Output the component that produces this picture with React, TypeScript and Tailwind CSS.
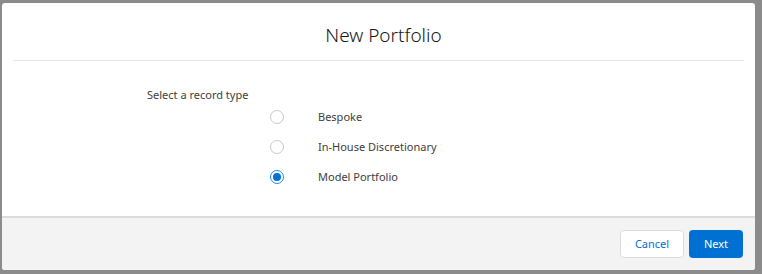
import React, { useState } from 'react';

const options = ['Bespoke', 'In-House Discretionary', 'Model Portfolio'];

export default function App() {
  const [selected, setSelected] = useState('Model Portfolio');

  return (
    <div
      className="w-[762px] h-[274px] bg-[#8b8b8b] pt-[3px] pl-[2px] overflow-hidden"
      style={{ fontFamily: '"Segoe UI", "Noto Sans", Arial, sans-serif' }}
    >
      <div className="w-[753px] h-[267px] bg-white rounded-[3px] flex flex-col overflow-hidden">
        <div className="mx-[11px] h-[58px] border-b border-[#e5e5e5] flex items-center justify-center">
          <h2 className="text-[19px] font-light text-[#181818] pt-[8px] pl-[10px]">New Portfolio</h2>
        </div>

        <div className="flex-1 pl-[145px] pt-[27px]">
          <p className="text-[11px] text-[#3e3e3c] leading-[14px]">Select a record type</p>
          <div className="pl-[123px] flex flex-col">
            {options.map((opt) => {
              const on = selected === opt;
              return (
                <label
                  key={opt}
                  onClick={() => setSelected(opt)}
                  className="h-[30px] flex items-center cursor-pointer"
                >
                  <span
                    className={
                      on
                        ? 'w-[14px] h-[14px] rounded-full border border-[#1b8ff0] flex items-center justify-center'
                        : 'w-[14px] h-[14px] rounded-full border border-[#c9c9c9] flex items-center justify-center'
                    }
                  >
                    {on && <span className="w-[8px] h-[8px] rounded-full bg-[#0070d2]" />}
                  </span>
                  <span className="ml-[34px] text-[11px] text-[#3e3e3c]">{opt}</span>
                </label>
              );
            })}
          </div>
        </div>

        <div className="h-[54px] bg-[#f3f3f3] border-t-2 border-[#dddbda] flex items-center justify-end gap-[5px] pr-[12px]">
          <button className="w-[64px] h-[28px] rounded-[4px] border border-[#dddbda] bg-white text-[11px] text-[#0070d2]">
            Cancel
          </button>
          <button className="w-[54px] h-[28px] rounded-[4px] bg-[#0070d2] text-[11px] text-white">
            Next
          </button>
        </div>
      </div>
    </div>
  );
}
